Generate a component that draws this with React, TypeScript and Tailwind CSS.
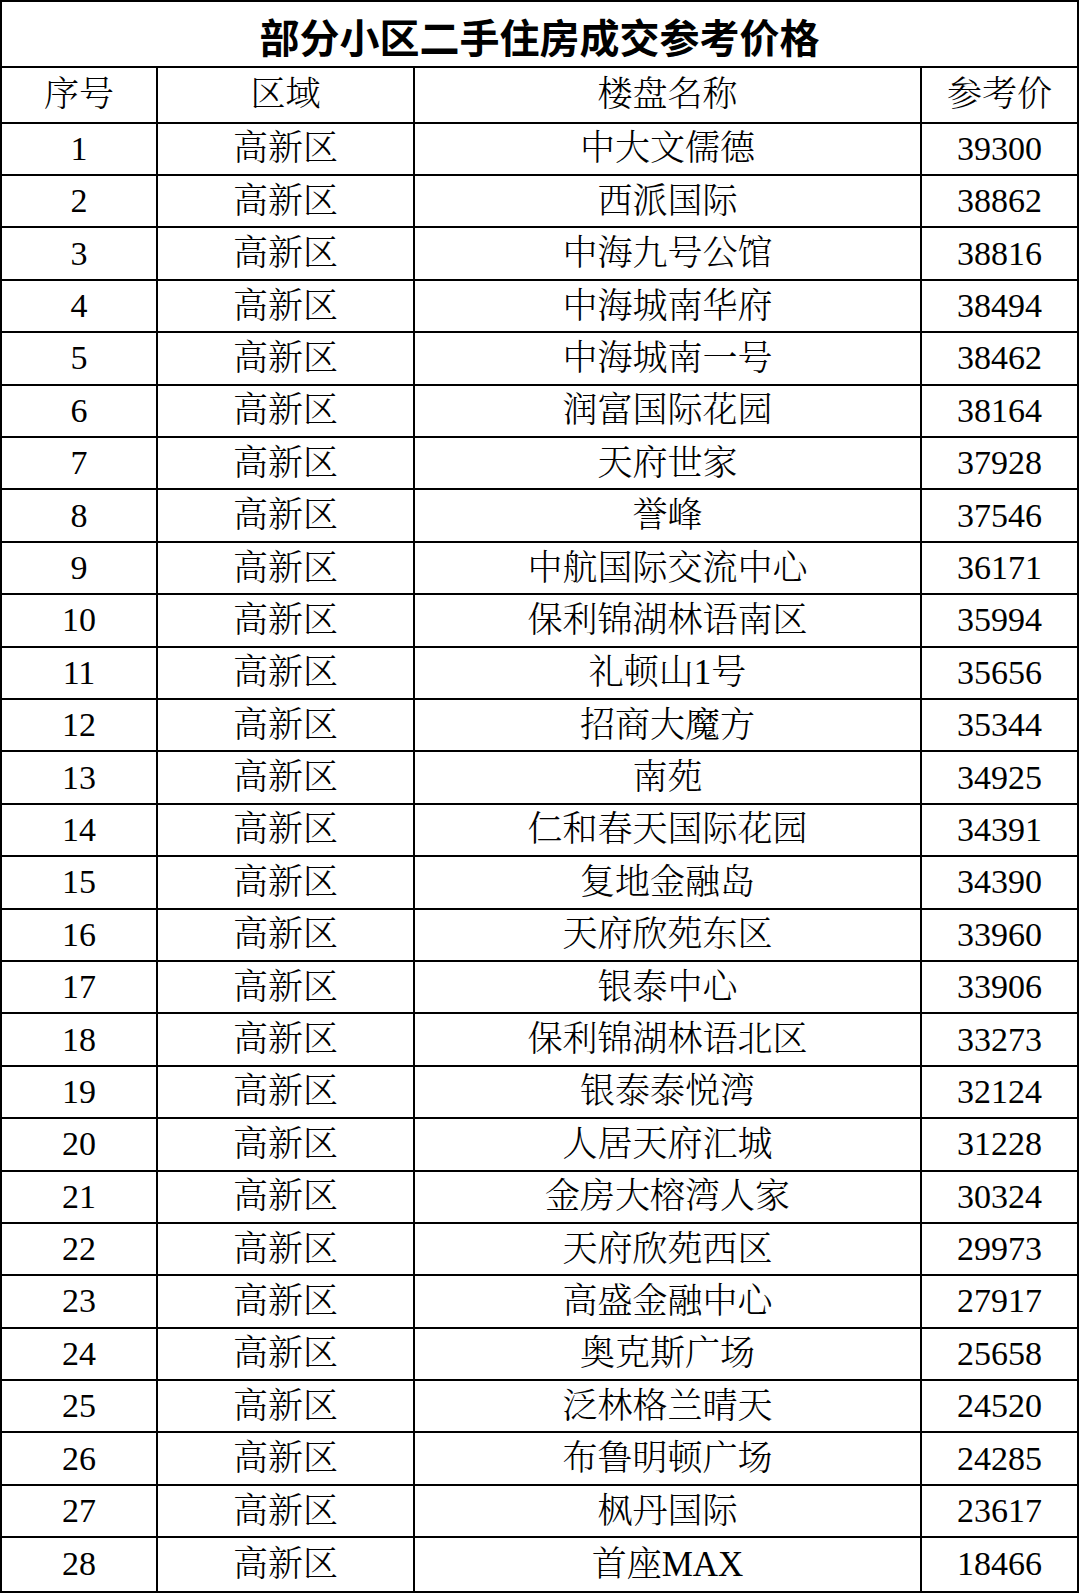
const rows: [string, string][] = [
  ['中大文儒德', '39300'],
  ['西派国际', '38862'],
  ['中海九号公馆', '38816'],
  ['中海城南华府', '38494'],
  ['中海城南一号', '38462'],
  ['润富国际花园', '38164'],
  ['天府世家', '37928'],
  ['誉峰', '37546'],
  ['中航国际交流中心', '36171'],
  ['保利锦湖林语南区', '35994'],
  ['礼顿山1号', '35656'],
  ['招商大魔方', '35344'],
  ['南苑', '34925'],
  ['仁和春天国际花园', '34391'],
  ['复地金融岛', '34390'],
  ['天府欣苑东区', '33960'],
  ['银泰中心', '33906'],
  ['保利锦湖林语北区', '33273'],
  ['银泰泰悦湾', '32124'],
  ['人居天府汇城', '31228'],
  ['金房大榕湾人家', '30324'],
  ['天府欣苑西区', '29973'],
  ['高盛金融中心', '27917'],
  ['奥克斯广场', '25658'],
  ['泛林格兰晴天', '24520'],
  ['布鲁明顿广场', '24285'],
  ['枫丹国际', '23617'],
  ['首座MAX', '18466'],
]

const cell = 'flex items-center justify-center border-r-2 border-black'

export default function App() {
  return (
    <div className="min-h-[1594px] w-[1080px] bg-white text-black font-[family-name:'Liberation_Serif','Noto_Serif_CJK_SC','Noto_Sans_CJK_SC',serif] font-light">
      <div className="w-[1079px] border-2 border-black">
        {/* title */}
        <div className="flex h-[66px] items-center justify-center border-b-2 border-black pt-1 font-[family-name:'Noto_Sans_CJK_SC',sans-serif] text-[40px] font-bold leading-none">
          部分小区二手住房成交参考价格
        </div>

        {/* header */}
        <div className="grid h-[55.7px] grid-cols-[156px_257px_507px_155px] border-b-2 border-black text-[35px] leading-none">
          <div className={cell}>序号</div>
          <div className={cell}>区域</div>
          <div className={cell}>楼盘名称</div>
          <div className="flex items-center justify-center">参考价</div>
        </div>

        {rows.map(([name, price], i) => (
          <div
            key={i}
            className={`grid h-[52.4px] grid-cols-[156px_257px_507px_155px] leading-none ${i < rows.length - 1 ? 'border-b-2 border-black' : ''}`}
          >
            <div className={`${cell} text-[34px]`}>{i + 1}</div>
            <div className={`${cell} text-[35px]`}>高新区</div>
            <div className={`${cell} text-[35px]`}>{name}</div>
            <div className="flex items-center justify-center text-[34px]">{price}</div>
          </div>
        ))}
      </div>
    </div>
  )
}
